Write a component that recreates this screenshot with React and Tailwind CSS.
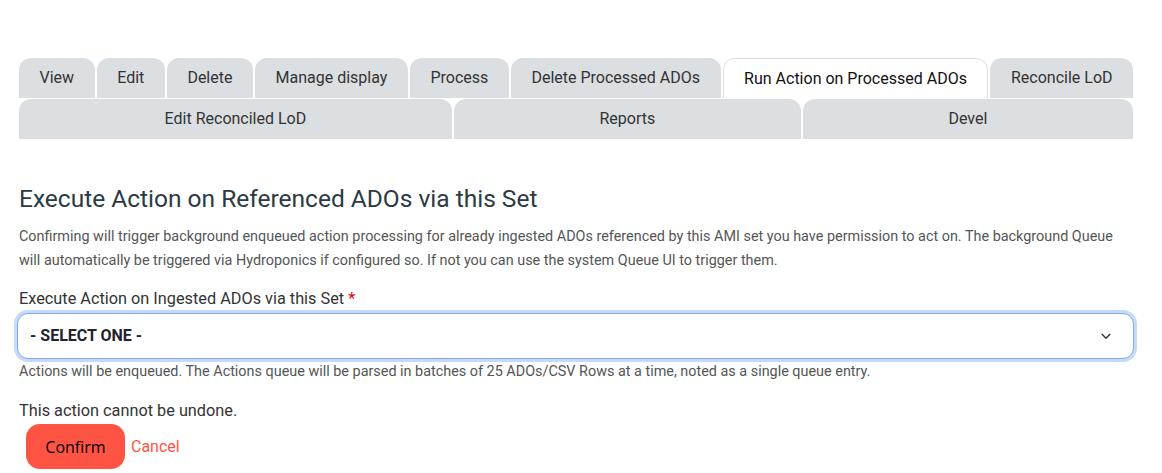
export default function App() {
  const row1 = [
    "View",
    "Edit",
    "Delete",
    "Manage display",
    "Process",
    "Delete Processed ADOs",
    "Run Action on Processed ADOs",
    "Reconcile LoD",
  ];
  const row2 = ["Edit Reconciled LoD", "Reports", "Devel"];
  return (
    <div className="w-[1162px] h-[473px] bg-white overflow-hidden text-[#222330] font-['Roboto',sans-serif]">
      <div className="pt-[58px] pl-[19px] pr-[29px]">
        <div className="flex gap-[2px]">
          {row1.map((t) => {
            const active = t === "Run Action on Processed ADOs";
            return (
              <div
                key={t}
                className={
                  "grow h-[40px] flex items-center justify-center px-5 rounded-t-[12px] text-[16px] whitespace-nowrap " +
                  (active
                    ? "bg-white border border-b-0 border-[#dcdfe1] text-[#111]"
                    : "bg-[#dcdfe1] text-[#333]")
                }
              >
                {t}
              </div>
            );
          })}
        </div>
        <div className="flex gap-[2px] mt-[1px]">
          {row2.map((t) => (
            <div
              key={t}
              className="grow h-[40px] flex items-center justify-center px-5 rounded-t-[12px] bg-[#dcdfe1] text-[#333] text-[16px] whitespace-nowrap"
            >
              {t}
            </div>
          ))}
        </div>
      </div>

      <div className="pl-[19px] pr-[29px]">
        <h2 className="mt-[44px] text-[24.5px] leading-[32px] text-[#2c3a45]">
          Execute Action on Referenced ADOs via this Set
        </h2>
        <p className="mt-[10px] text-[14.4px] leading-[24px] text-[#555]">
          Confirming will trigger background enqueued action processing for already ingested ADOs referenced by this AMI set you have permission to act on. The background Queue will automatically be triggered via Hydroponics if configured so. If not you can use the system Queue UI to trigger them.
        </p>
        <div className="mt-[14px] text-[16.3px] leading-[24px] text-[#333]">
          Execute Action on Ingested ADOs via this Set <span className="text-[#e00]">*</span>
        </div>
        <div className="ml-[-2px] mt-[2px] w-[1117px] h-[46px] rounded-[11px] border border-[#7faaf0] ring-[3px] ring-[#c7dafc] flex items-center justify-between pl-[12px] pr-[20px] bg-white">
          <span className="text-[16px] font-bold text-[#222330]">- SELECT ONE -</span>
          <svg width="14" height="14" viewBox="0 0 16 16" fill="none" stroke="#333" strokeWidth="1.6" strokeLinecap="round" strokeLinejoin="round">
            <path d="M3.5 6 L8 10.5 L12.5 6" />
          </svg>
        </div>
        <div className="mt-[1px] text-[14.4px] leading-[24px] text-[#555]">
          Actions will be enqueued. The Actions queue will be parsed in batches of 25 ADOs/CSV Rows at a time, noted as a single queue entry.
        </div>
        <div className="mt-[15px] text-[16.3px] leading-[24px] text-[#333]">
          This action cannot be undone.
        </div>
        <div className="flex items-center mt-[1px]">
          <button className="ml-[7px] w-[99px] h-[45px] rounded-[14px] bg-[#ff5444] text-black text-[16px] font-['Open_Sans',sans-serif]">
            Confirm
          </button>
          <a className="ml-[6px] text-[16px] text-[#ff5444]">Cancel</a>
        </div>
      </div>
    </div>
  );
}
